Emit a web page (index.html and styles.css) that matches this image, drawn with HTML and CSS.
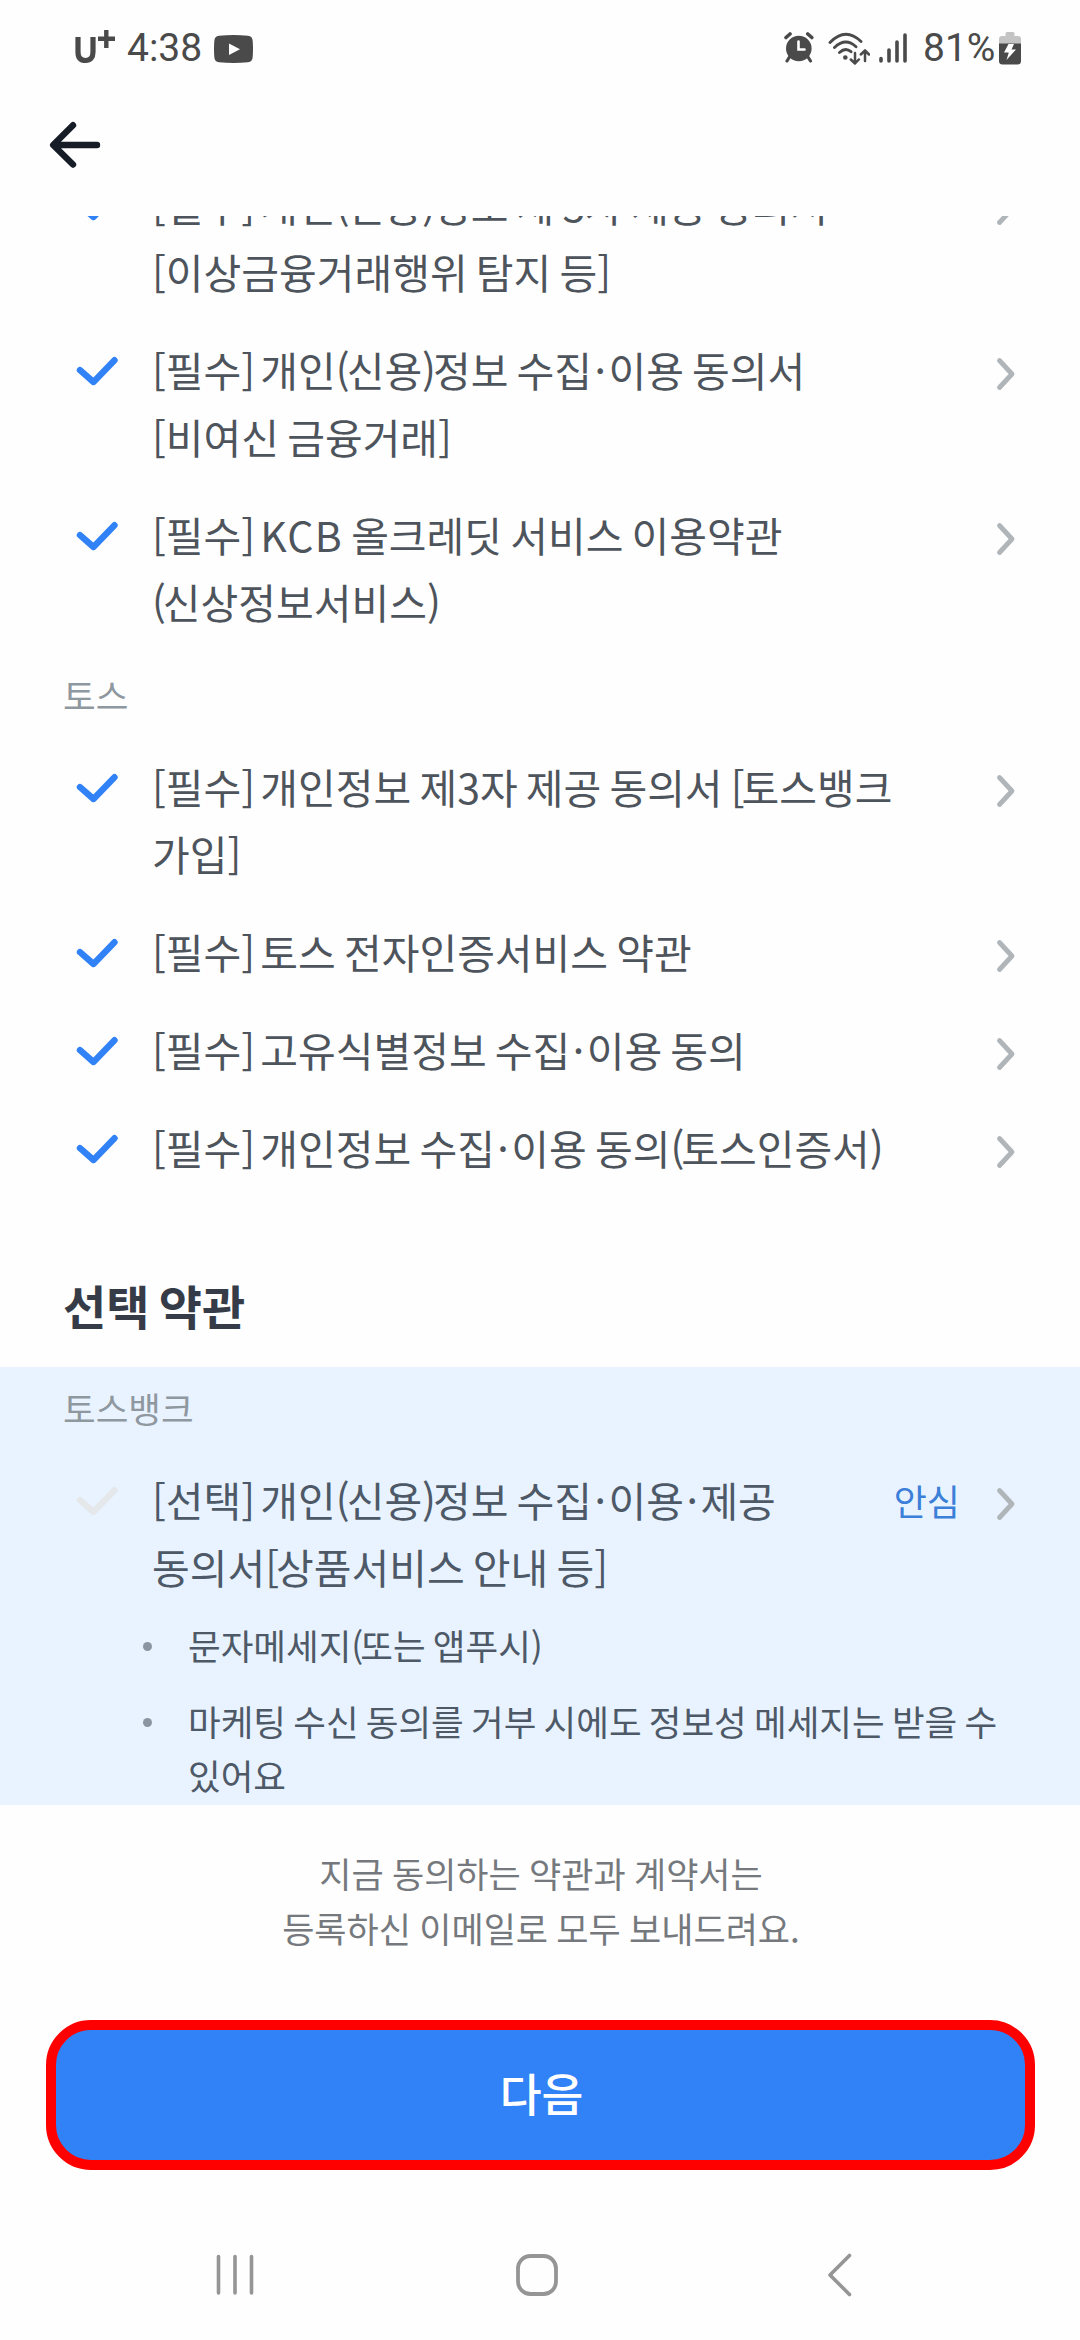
FILE: index.html
```html
<!DOCTYPE html>
<html lang="ko">
<head>
<meta charset="utf-8">
<title>약관 동의</title>
<link rel="stylesheet" href="styles.css">
</head>
<body>
<svg width="0" height="0" class="defs">
  <symbol id="check" viewBox="0 0 42 30"><path d="M4 14.200 17.500 26 38.500 4.200" fill="none" stroke="currentColor" stroke-width="6.400" stroke-linecap="round" stroke-linejoin="round"/></symbol>
  <symbol id="chev" viewBox="0 0 20 34"><path d="M3.500 3.500 16 17 3.500 30.500" fill="none" stroke="currentColor" stroke-width="4.800" stroke-linecap="round" stroke-linejoin="round"/></symbol>
</svg>
<div class="screen">
  <header class="status">
    <div class="status-left">
      <svg class="carrier" width="40" height="34" viewBox="0 0 40 34"><path d="M3 7v15q0 8.500 7.500 8.500T18 22V7" fill="none" stroke="#4a4a4a" stroke-width="5.200"/><path d="M31.300 0v18M23 8.800h17" fill="none" stroke="#4a4a4a" stroke-width="4.400"/></svg>
      <span class="time">4:38</span>
      <svg class="yt" width="39" height="28" viewBox="0 0 39 28"><path d="M5 .7Q19.500-.7 34 .7 38.500 1.300 38.700 6q.6 8 0 16-.2 4.700-4.700 5.300-14.500 1.400-29 0Q.5 26.700.3 22-.3 14 .3 6 .5 1.300 5 .7Z" fill="#4a4a4a"/><path d="M15 8.500v11.500l11-5.700Z" fill="#fff"/></svg>
    </div>
    <div class="status-right">
      <svg width="30" height="31" viewBox="0 0 30 31" fill="none" stroke="#4a4a4a" stroke-linecap="round"><circle cx="14.800" cy="16.500" r="12.800" fill="#4a4a4a" stroke="none"/><path d="M2 5.500 6 2M23.800 2l4 3.500" stroke-width="3.600"/><path d="m5.500 25-2.500 4M24 25l2.500 4" stroke-width="3.200"/><path d="M14.500 9.500v8h6" stroke="#fff" stroke-width="2.600"/></svg>
      <svg class="wifi" width="42" height="33" viewBox="0 0 42 33" fill="none" stroke="#4a4a4a" stroke-width="2.900" stroke-linecap="round"><path d="M2 10.500Q17.500-5.500 33 9.500M6.500 15.500q11-10.500 21.500-.8M11.500 20.500q6-5.500 11.500-.8"/><circle cx="17.300" cy="25.500" r="2.300" fill="#4a4a4a" stroke="none"/><path d="M27 21v10.500M22.800 27.500l4.200 4 3.800-4M37 29V18.500M32.800 22.500l4.200-4 4 4" stroke-width="2.500" stroke-linejoin="round"/></svg>
      <svg class="signal" width="28" height="30" viewBox="0 0 28 30" stroke="#4a4a4a" stroke-width="3.600" stroke-linecap="round"><path d="M2 25.500V28M10 17v11M18 9v19M26 2v26"/></svg>
      <span class="pct">81%</span>
      <svg class="battery" width="22" height="33" viewBox="0 0 22 33"><path d="M6.500 1.500Q6.500 0 8 0h6q1.500 0 1.500 1.500V4H19q3 0 3 3v5H0V7q0-3 3-3h3.500Z" fill="#c4c4c4"/><path d="M0 11.500h22V29q0 3.500-3.500 3.500h-15Q0 32.500 0 29Z" fill="#4a4a4a"/><path d="M9.500 12h5.500l-2.500 5.500H17L7.500 28l2.300-7.500H5Z" fill="#fff"/></svg>
    </div>
  </header>
  <nav class="appbar">
    <svg width="54" height="48" viewBox="0 0 54 48" fill="none" stroke="#161d26" stroke-width="6.400" stroke-linecap="round" stroke-linejoin="round"><path d="M25 4.200 5.200 24 25 43.500M5.500 24H49"/></svg>
  </nav>
  <main class="scroll">
    <ul class="terms first">
      <li><svg class="check"><use href="#check"/></svg><p>[필수<i>]</i> 개인<i>(</i>신용<i>)</i>정보 제 3자 제공 동의서<br>[이상금융거래행위 탐지 등]</p><svg class="chev"><use href="#chev"/></svg></li>
      <li><svg class="check"><use href="#check"/></svg><p>[필수<i>]</i> 개인<i>(</i>신용<i>)</i>정보 수집<b>·</b>이용 동의서<br>[비여신 금융거래]</p><svg class="chev"><use href="#chev"/></svg></li>
      <li><svg class="check"><use href="#check"/></svg><p>[필수<i>]</i> <span class="latin">KCB</span> 올크레딧 서비스 이용약관<br><i>(</i>신상정보서비스)</p><svg class="chev"><use href="#chev"/></svg></li>
    </ul>
    <h3 class="group">토스</h3>
    <ul class="terms">
      <li><svg class="check"><use href="#check"/></svg><p>[필수<i>]</i> 개인정보 제3자 제공 동의서 <i>[</i>토스뱅크<br>가입]</p><svg class="chev"><use href="#chev"/></svg></li>
      <li><svg class="check"><use href="#check"/></svg><p>[필수<i>]</i> 토스 전자인증서비스 약관</p><svg class="chev"><use href="#chev"/></svg></li>
      <li><svg class="check"><use href="#check"/></svg><p>[필수<i>]</i> 고유식별정보 수집<b>·</b>이용 동의</p><svg class="chev"><use href="#chev"/></svg></li>
      <li><svg class="check"><use href="#check"/></svg><p>[필수<i>]</i> 개인정보 수집<b>·</b>이용 동의<i>(</i>토스인증서)</p><svg class="chev"><use href="#chev"/></svg></li>
    </ul>
    <h2 class="title">선택 약관</h2>
    <section class="optional">
      <h3 class="group">토스뱅크</h3>
      <ul class="terms">
        <li><svg class="check off"><use href="#check"/></svg><p>[선택<i>]</i> 개인<i>(</i>신용<i>)</i>정보 수집<b>·</b>이용<b>·</b>제공<br>동의서<i>[</i>상품서비스 안내 등]</p><span class="safe">안심</span><svg class="chev"><use href="#chev"/></svg></li>
      </ul>
      <ul class="notes">
        <li>문자메세지<i>(</i>또는 앱푸시)</li>
        <li>마케팅 수신 동의를 거부 시에도 정보성 메세지는 받을 수<br>있어요</li>
      </ul>
    </section>
  </main>
  <footer class="bottom">
    <p class="guide">지금 동의하는 약관과 계약서는<br>등록하신 이메일로 모두 보내드려요.</p>
    <button class="next">다음</button>
  </footer>
  <div class="navbar">
    <svg width="40" height="42" viewBox="0 0 40 42" stroke="#959595" stroke-width="3.600" stroke-linecap="round"><path d="M2.500 2.500v36.500M19 2.500v36.500M35.500 2.500v36.500"/></svg>
    <svg class="home" width="42" height="42" viewBox="0 0 42 42" fill="none" stroke="#959595" stroke-width="3.800"><rect x="2" y="2" width="38" height="38" rx="12.500"/></svg>
    <svg class="back" width="26" height="44" viewBox="0 0 26 44" fill="none" stroke="#959595" stroke-width="3.600" stroke-linecap="round" stroke-linejoin="round"><path d="M22.500 2.500 3 22l19.500 19.500"/></svg>
  </div>
</div>
</body>
</html>
```
FILE: styles.css
```css
* { box-sizing: border-box; margin: 0; padding: 0; }
body { background: #fefefe; font-family: "Noto Sans CJK KR", sans-serif; color: #4e545c; }
/* tightened brackets and widened middle dots */
i { font-style: normal; letter-spacing: -3px; }
b { font-weight: inherit; margin: 0 2.500px; }
.latin { letter-spacing: 1.300px; }
.defs { display: block; position: absolute; }
.screen { width: 1080px; height: 2340px; display: flex; flex-direction: column; overflow: hidden; }
.status { height: 96px; display: flex; justify-content: space-between; padding: 0 59px 0 75px; font-family: Roboto, sans-serif; color: #4a4a4a; }
.status-left, .status-right { display: flex; align-items: flex-start; }
.status-left { padding-top: 30px; }
.status-right { padding-top: 32px; }
.time, .pct { font-size: 39px; line-height: 46px; height: 46px; }
.time { margin: -5px 0 0 12px; width: 76px; }
.yt { margin: 5px 0 0 11px; }
.wifi { margin-left: 14px; }
.signal { margin: 1px 0 0 9px; }
.pct { margin: -7px 0 0 16px; width: 70px; }
.battery { margin-left: 6px; }
.appbar { height: 120px; padding: 25px 0 0 48px; }
.scroll { height: 1589px; overflow: hidden; }
.terms { list-style: none; display: flex; flex-direction: column; gap: 31px; }
.terms.first { margin-top: -45px; }
.terms li { display: flex; padding: 0 64px 0 76px; font-size: 41px; line-height: 67px; word-spacing: -3.300px; }
.terms p { margin-left: 34px; flex: 1; white-space: nowrap; }
.check { width: 42px; height: 30px; margin-top: 20px; color: #3182f6; flex: none; }
.check.off { color: #e5e8eb; }
.chev { width: 20px; height: 34px; margin-top: 21px; color: #b0b5b9; flex: none; }
.group { font-size: 35.500px; font-weight: 400; line-height: 50px; padding-left: 63px; color: #8f979f; }
.scroll > .group { margin: 35px 0 33px; }
.title { font-size: 47px; font-weight: 700; line-height: 70px; margin: 89px 0 27px; padding-left: 63px; color: #363c47; word-spacing: -4px; }
.optional { background: #e8f3ff; height: 438px; padding-top: 16px; color: #4e5968; }
.optional .terms { margin-top: 33px; }
.safe { font-size: 36px; color: #3b7fd8; margin-right: 36px; padding-top: 1px; }
.notes { list-style: none; margin-top: 18px; padding-left: 142px; font-size: 35.500px; line-height: 54px; white-space: nowrap; word-spacing: -2.700px; }
.notes li { display: block; position: relative; padding-left: 46px; margin-bottom: 22px; }
.notes li::before { content: ""; position: absolute; left: 1px; top: 24px; width: 9px; height: 9px; border-radius: 50%; background: #8b95a1; }
.bottom { display: flex; flex-direction: column; align-items: center; padding-top: 40px; height: 365px; }
.guide { font-size: 35px; line-height: 55px; text-align: center; color: #75797d; word-spacing: -1.500px; padding-left: 2px; }
.next { margin: 65px 0 0 1px; width: 989px; height: 150px; flex: none; border: 10px solid #f00; border-radius: 45px; background: #3182f6; color: #fff; font: 500 45.500px/120px "Noto Sans CJK KR", sans-serif; padding: 0 0 6px 2px; }
.navbar { flex: 1; display: flex; align-items: center; padding: 40px 0 0 216px; }
.home { margin-left: 260px; }
.back { margin-left: 269px; }
```
